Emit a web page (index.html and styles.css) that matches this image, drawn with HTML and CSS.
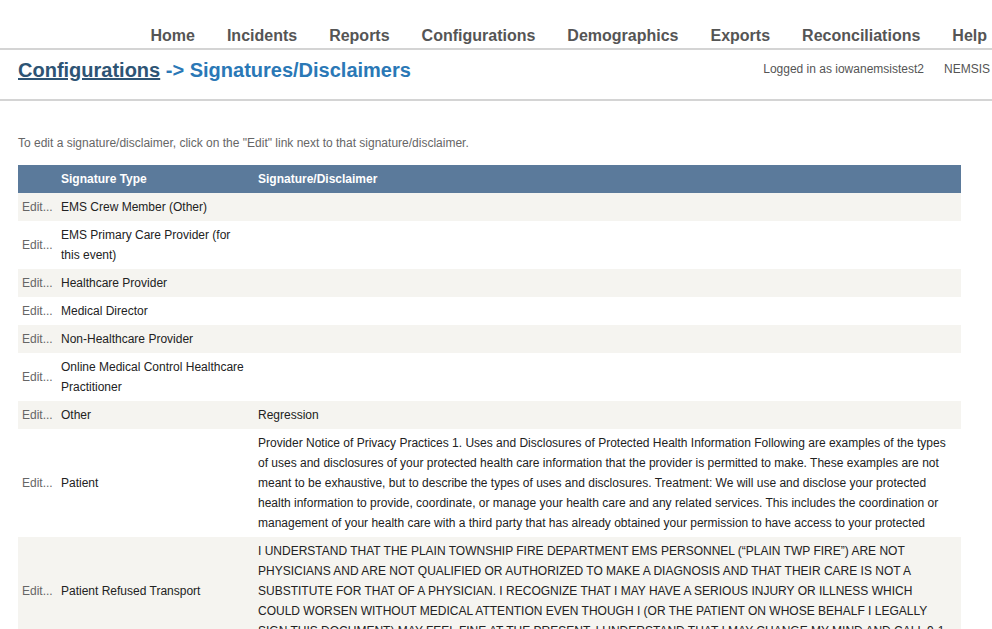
FILE: index.html
```html
<!DOCTYPE html>
<html lang="en">
<head>
    <meta charset="utf-8" />
    <title>Signatures/Disclaimers</title>
    <link rel="stylesheet" href="styles.css">
</head>
<body>
  <div id="nav">
      <a href="#">Home</a>
      <a href="#">Incidents</a>
      <a href="#">Reports</a>
      <a href="#">Configurations</a>
      <a href="#">Demographics</a>
      <a href="#">Exports</a>
      <a href="#">Reconciliations</a>
      <a href="#">Help</a>
  </div>
  <div id="title-bar">
      <h1><a href="#">Configurations</a> -&gt; Signatures/Disclaimers</h1>
      <div id="user-info">
          <span>Logged in as iowanemsistest2</span>
          <span>NEMSIS</span>
      </div>
  </div>
  <div id="content">
      <p class="hint">To edit a signature/disclaimer, click on the "Edit" link next to that signature/disclaimer.</p>
      <table class="grid">
          <thead>
              <tr>
                  <th class="col-edit"></th>
                  <th class="col-type">Signature Type</th>
                  <th>Signature/Disclaimer</th>
              </tr>
          </thead>
          <tbody>
              <tr><td><a href="#">Edit...</a></td><td>EMS Crew Member (Other)</td><td></td></tr>
              <tr><td><a href="#">Edit...</a></td><td>EMS Primary Care Provider (for this event)</td><td></td></tr>
              <tr><td><a href="#">Edit...</a></td><td>Healthcare Provider</td><td></td></tr>
              <tr><td><a href="#">Edit...</a></td><td>Medical Director</td><td></td></tr>
              <tr><td><a href="#">Edit...</a></td><td>Non-Healthcare Provider</td><td></td></tr>
              <tr><td><a href="#">Edit...</a></td><td>Online Medical Control Healthcare Practitioner</td><td></td></tr>
              <tr><td><a href="#">Edit...</a></td><td>Other</td><td>Regression</td></tr>
              <tr>
                  <td><a href="#">Edit...</a></td>
                  <td>Patient</td>
                  <td>Provider Notice of Privacy Practices 1. Uses and Disclosures of Protected Health Information Following are examples of the types of uses and disclosures of your protected health care information that the provider is permitted to make. These examples are not meant to be exhaustive, but to describe the types of uses and disclosures. Treatment: We will use and disclose your protected health information to provide, coordinate, or manage your health care and any related services. This includes the coordination or management of your health care with a third party that has already obtained your permission to have access to your protected</td>
              </tr>
              <tr>
                  <td><a href="#">Edit...</a></td>
                  <td>Patient Refused Transport</td>
                  <td>I UNDERSTAND THAT THE PLAIN TOWNSHIP FIRE DEPARTMENT EMS PERSONNEL (“PLAIN TWP FIRE”) ARE NOT PHYSICIANS AND ARE NOT QUALIFIED OR AUTHORIZED TO MAKE A DIAGNOSIS AND THAT THEIR CARE IS NOT A SUBSTITUTE FOR THAT OF A PHYSICIAN. I RECOGNIZE THAT I MAY HAVE A SERIOUS INJURY OR ILLNESS WHICH COULD WORSEN WITHOUT MEDICAL ATTENTION EVEN THOUGH I (OR THE PATIENT ON WHOSE BEHALF I LEGALLY SIGN THIS DOCUMENT) MAY FEEL FINE AT THE PRESENT. I UNDERSTAND THAT I MAY CHANGE MY MIND AND CALL 9-1</td>
              </tr>
          </tbody>
      </table>
  </div>
</body>
</html>
```

FILE: styles.css
```css
body{
    margin: 0;
    font-family: "Liberation Sans", Arial, sans-serif;
    color: #333;
    background: #fff;
}

a{
    text-decoration: none;
}

#nav{
    display: flex;
    justify-content: flex-end;
    align-items: flex-end;
    gap: 32px;
    height: 50px;
    padding: 0 5px 0 0;
    border-bottom: 2px solid #d4d4d4;
    box-sizing: border-box;
}

#nav a{
    font-size: 16px;
    font-weight: bold;
    color: #555;
    line-height: 20px;
    padding-bottom: 2px;
}

#title-bar{
    display: flex;
    justify-content: space-between;
    align-items: flex-start;
    height: 49px;
    padding: 0 0 0 18px;
    border-bottom: 2px solid #d4d4d4;
}

h1{
    margin: 8px 0 0 0;
    font-size: 20px;
    line-height: 24px;
    color: #2a78b6;
}

h1 a{
    color: #2e5474;
    text-decoration: underline;
}

#user-info{
    display: flex;
    gap: 20px;
    margin-top: 12px;
    padding-right: 2px;
    font-size: 12px;
    color: #555;
    white-space: nowrap;
}

#content{
    padding: 0 31px 0 18px;
}

.hint{
    margin: 35px 0 15px 0;
    font-size: 12px;
    color: #666;
}

.grid{
    width: 100%;
    border-collapse: collapse;
    font-size: 12px;
}

.grid th{
    background: #5b7a9b;
    color: #fff;
    text-align: left;
    height: 28px;
    padding: 0 4px;
    font-size: 12px;
}

.grid td{
    padding: 4px 4px;
    line-height: 20px;
    vertical-align: middle;
    color: #222;
}

.grid tbody tr:nth-child(odd){
    background: #f5f4f0;
}

.grid td a{
    color: #666;
}

.col-edit{
    width: 31px;
}

.col-type{
    width: 189px;
}
```
